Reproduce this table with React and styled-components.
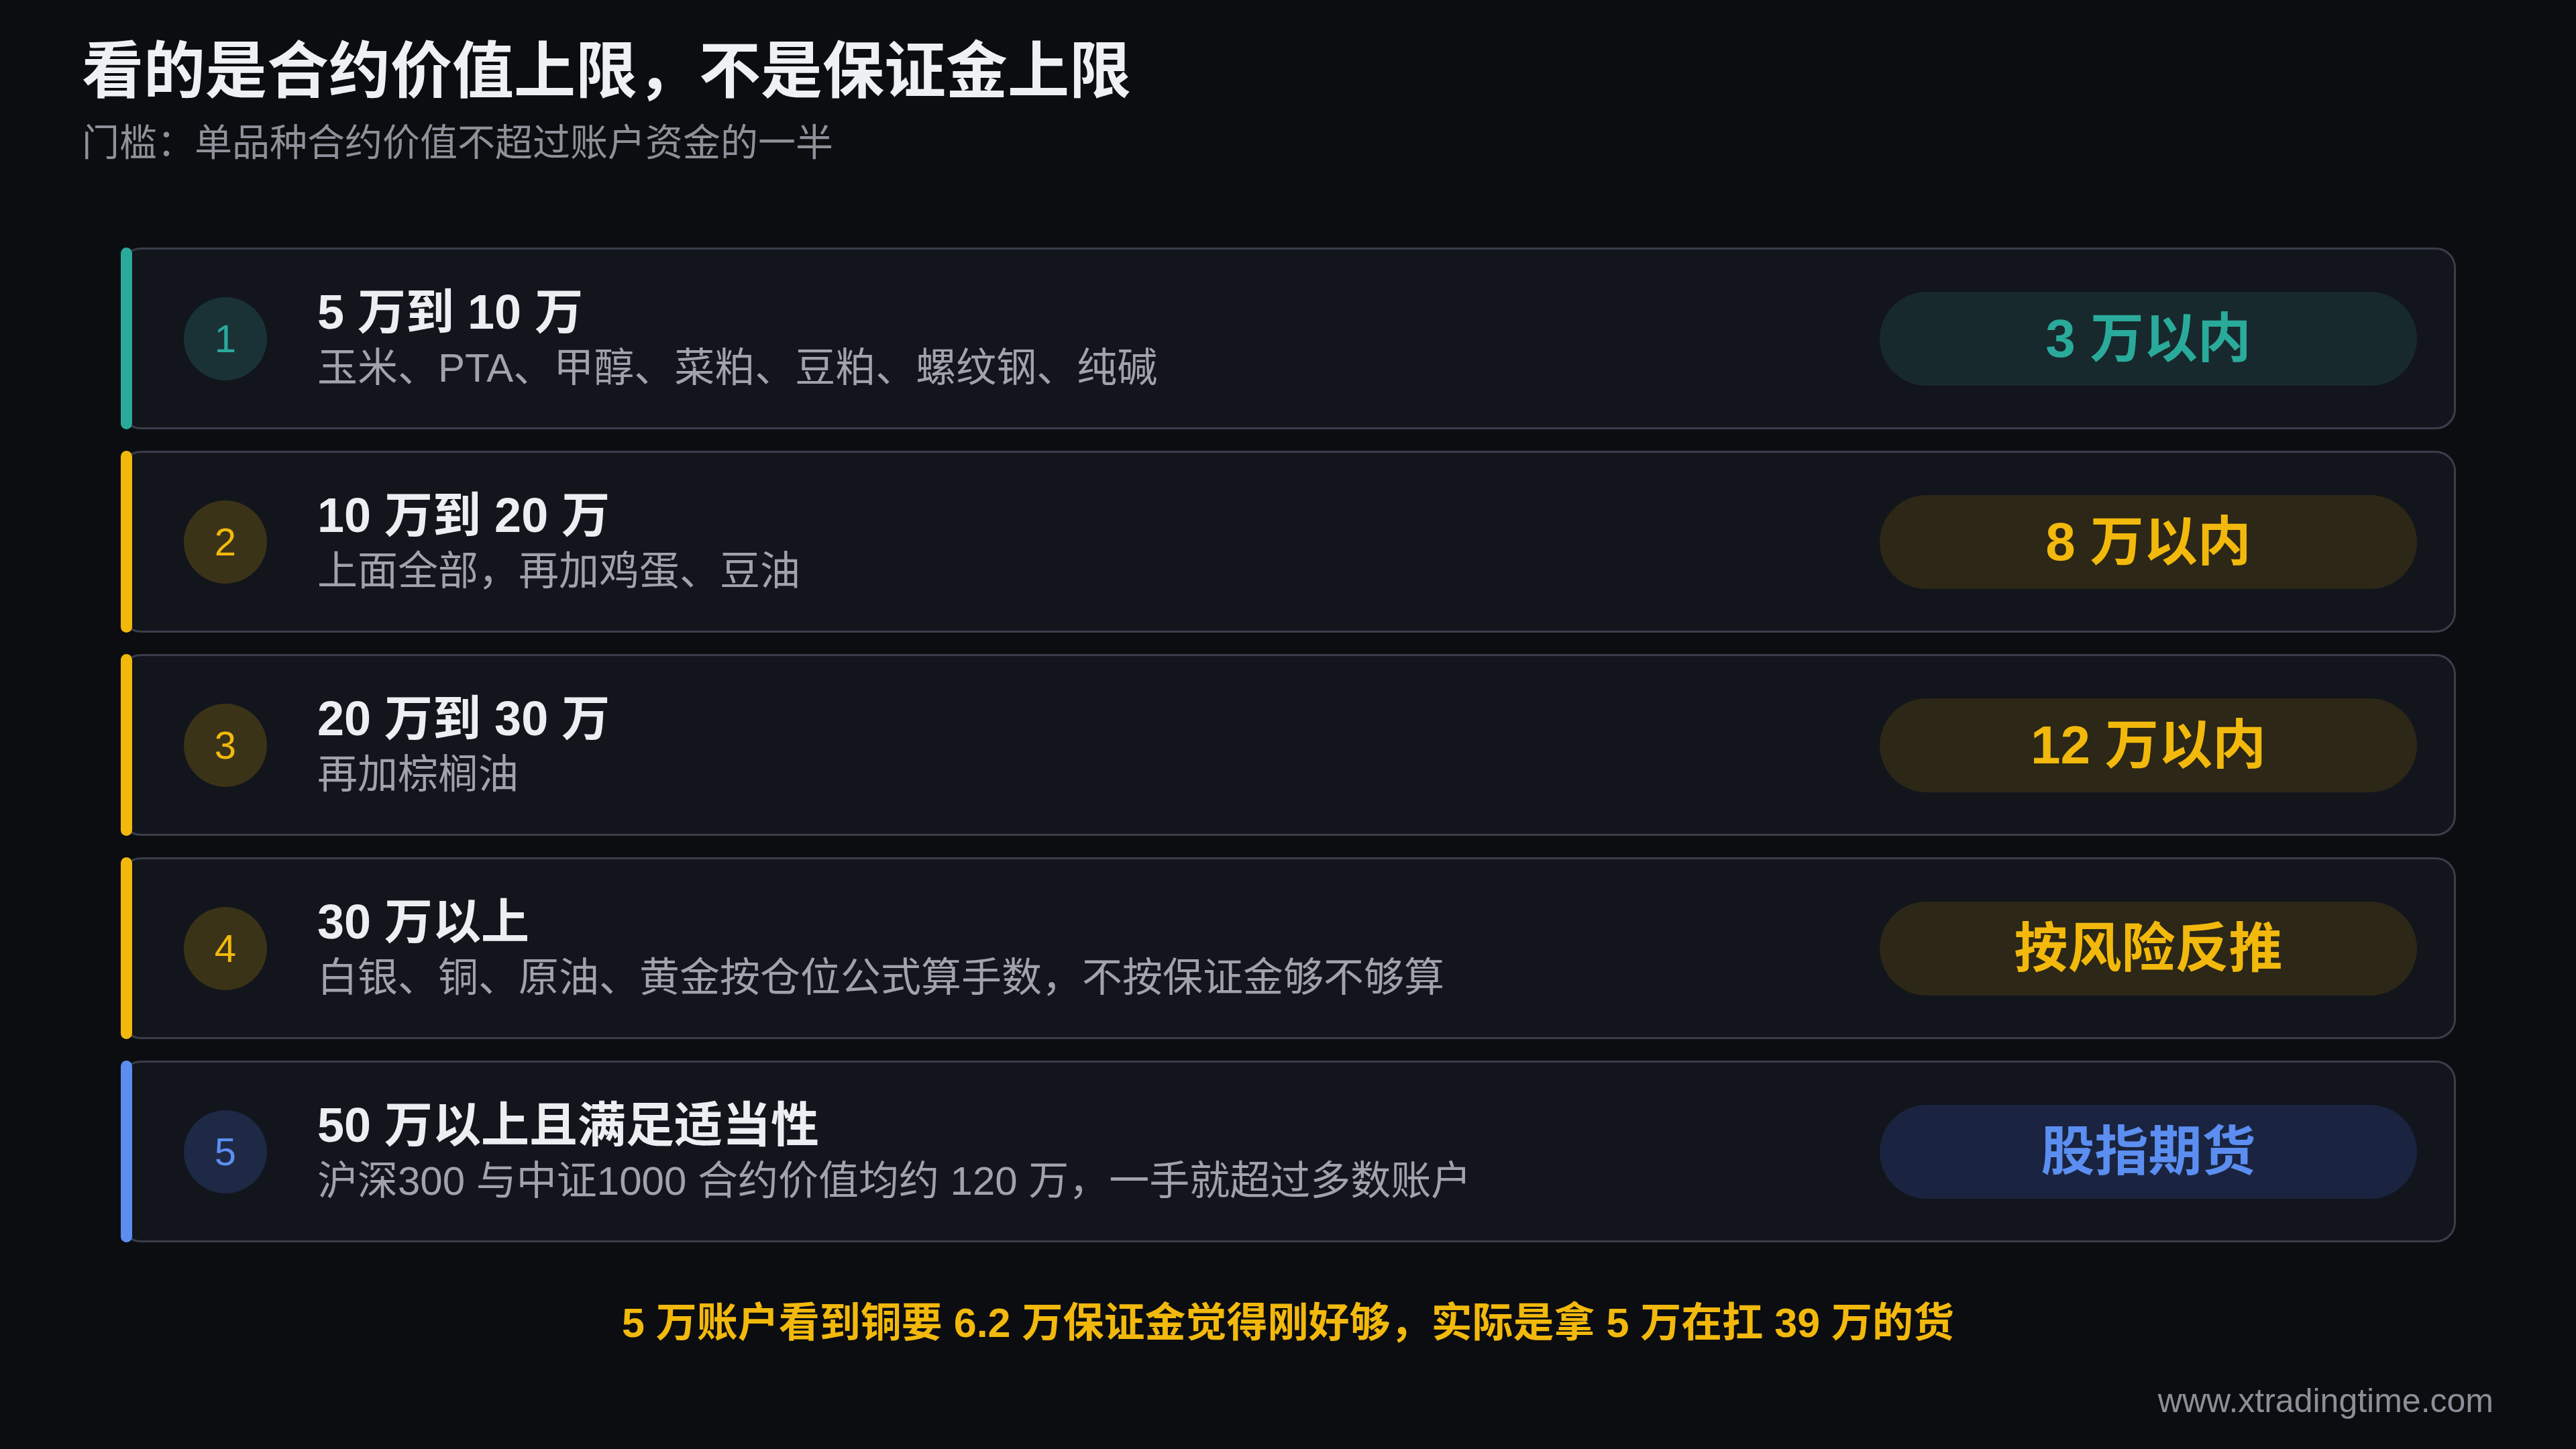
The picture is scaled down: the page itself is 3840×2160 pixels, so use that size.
import React from "react";
import styled, { createGlobalStyle } from "styled-components";

const GlobalStyle = createGlobalStyle`
  html, body { margin: 0; padding: 0; background: #0c0d11; }
  body { font-family: "Liberation Sans", "Noto Sans CJK SC", sans-serif; }
`;

const tones = {
  teal: { main: "#2aaa9b", soft: "#1a3236", pill: "#17292d" },
  yellow: { main: "#f2b90c", soft: "#3b3318", pill: "#2c2716" },
  blue: { main: "#5b8ef0", soft: "#1e2946", pill: "#1a2440" },
};

const Page = styled.div`
  width: 3840px;
  height: 2160px;
  box-sizing: border-box;
  background: #0c0d11;
  display: flex;
  flex-direction: column;
  overflow: hidden;
`;

const Header = styled.header`
  padding: 51px 122px 0;
  display: flex;
  flex-direction: column;
  gap: 15px;
`;

const Title = styled.h1`
  margin: 0;
  font-size: 92px;
  line-height: 110px;
  font-weight: 600;
  color: #eef0f4;
  font-family: "Liberation Sans", "Noto Sans CJK SC", sans-serif;
`;

const Subtitle = styled.p`
  margin: 0;
  font-size: 56px;
  line-height: 74px;
  color: #8e9199;
`;

const List = styled.section`
  margin-top: 119px;
  padding: 0 179px 0 180px;
  display: flex;
  flex-direction: column;
  gap: 32px;
`;

const Card = styled.div`
  height: 271px;
  box-sizing: border-box;
  border: 3px solid #3a3e4b;
  border-radius: 30px;
  background: #12151c;
  display: flex;
  align-items: center;
`;

const Accent = styled.div`
  align-self: stretch;
  width: 17px;
  margin: -3px 0 -3px -3px;
  border-radius: 9px;
  background: ${(p) => tones[p.$tone].main};
  flex-shrink: 0;
`;

const Row = styled.div`
  flex: 1;
  display: flex;
  align-items: center;
  gap: 75px;
  padding: 0 55px 0 77px;
`;

const Badge = styled.div`
  width: 124px;
  height: 124px;
  border-radius: 50%;
  flex-shrink: 0;
  background: ${(p) => tones[p.$tone].soft};
  color: ${(p) => tones[p.$tone].main};
  display: flex;
  align-items: center;
  justify-content: center;
  font-size: 58px;
  line-height: 1;
`;

const Texts = styled.div`
  flex: 1;
  display: flex;
  flex-direction: column;
  gap: 2px;
`;

const Heading = styled.div`
  font-size: 72px;
  line-height: 86px;
  font-weight: 600;
  color: #eceef2;
`;

const Detail = styled.div`
  font-size: 60px;
  line-height: 78px;
  color: #a0a3ab;
`;

const Pill = styled.div`
  width: 801px;
  height: 140px;
  box-sizing: border-box;
  padding-bottom: 0;
  border-radius: 70px;
  flex-shrink: 0;
  background: ${(p) => tones[p.$tone].pill};
  color: ${(p) => tones[p.$tone].main};
  display: flex;
  align-items: center;
  justify-content: center;
  font-size: 80px;
  line-height: 1;
  font-weight: 600;
`;

const Note = styled.p`
  margin: 81px 0 0;
  text-align: center;
  font-size: 61px;
  line-height: 78px;
  font-weight: 600;
  color: #f2b90c;
`;

const Footer = styled.footer`
  margin-top: 47px;
  padding-right: 123px;
  text-align: right;
  font-size: 50px;
  line-height: 60px;
  color: #8b8f98;
`;

const rows = [
  { n: 1, tone: "teal", h: "5 万到 10 万", d: "玉米、PTA、甲醇、菜粕、豆粕、螺纹钢、纯碱", p: "3 万以内" },
  { n: 2, tone: "yellow", h: "10 万到 20 万", d: "上面全部，再加鸡蛋、豆油", p: "8 万以内" },
  { n: 3, tone: "yellow", h: "20 万到 30 万", d: "再加棕榈油", p: "12 万以内" },
  { n: 4, tone: "yellow", h: "30 万以上", d: "白银、铜、原油、黄金按仓位公式算手数，不按保证金够不够算", p: "按风险反推" },
  { n: 5, tone: "blue", h: "50 万以上且满足适当性", d: "沪深300 与中证1000 合约价值均约 120 万，一手就超过多数账户", p: "股指期货" },
];

export default function App() {
  return (
    <Page>
      <GlobalStyle />
      <Header>
        <Title>看的是合约价值上限，不是保证金上限</Title>
        <Subtitle>门槛：单品种合约价值不超过账户资金的一半</Subtitle>
      </Header>
      <List>
        {rows.map((r) => (
          <Card key={r.n}>
            <Accent $tone={r.tone} />
            <Row>
              <Badge $tone={r.tone}>{r.n}</Badge>
              <Texts>
                <Heading>{r.h}</Heading>
                <Detail>{r.d}</Detail>
              </Texts>
              <Pill $tone={r.tone}>{r.p}</Pill>
            </Row>
          </Card>
        ))}
      </List>
      <Note>5 万账户看到铜要 6.2 万保证金觉得刚好够，实际是拿 5 万在扛 39 万的货</Note>
      <Footer>www.xtradingtime.com</Footer>
    </Page>
  );
}
